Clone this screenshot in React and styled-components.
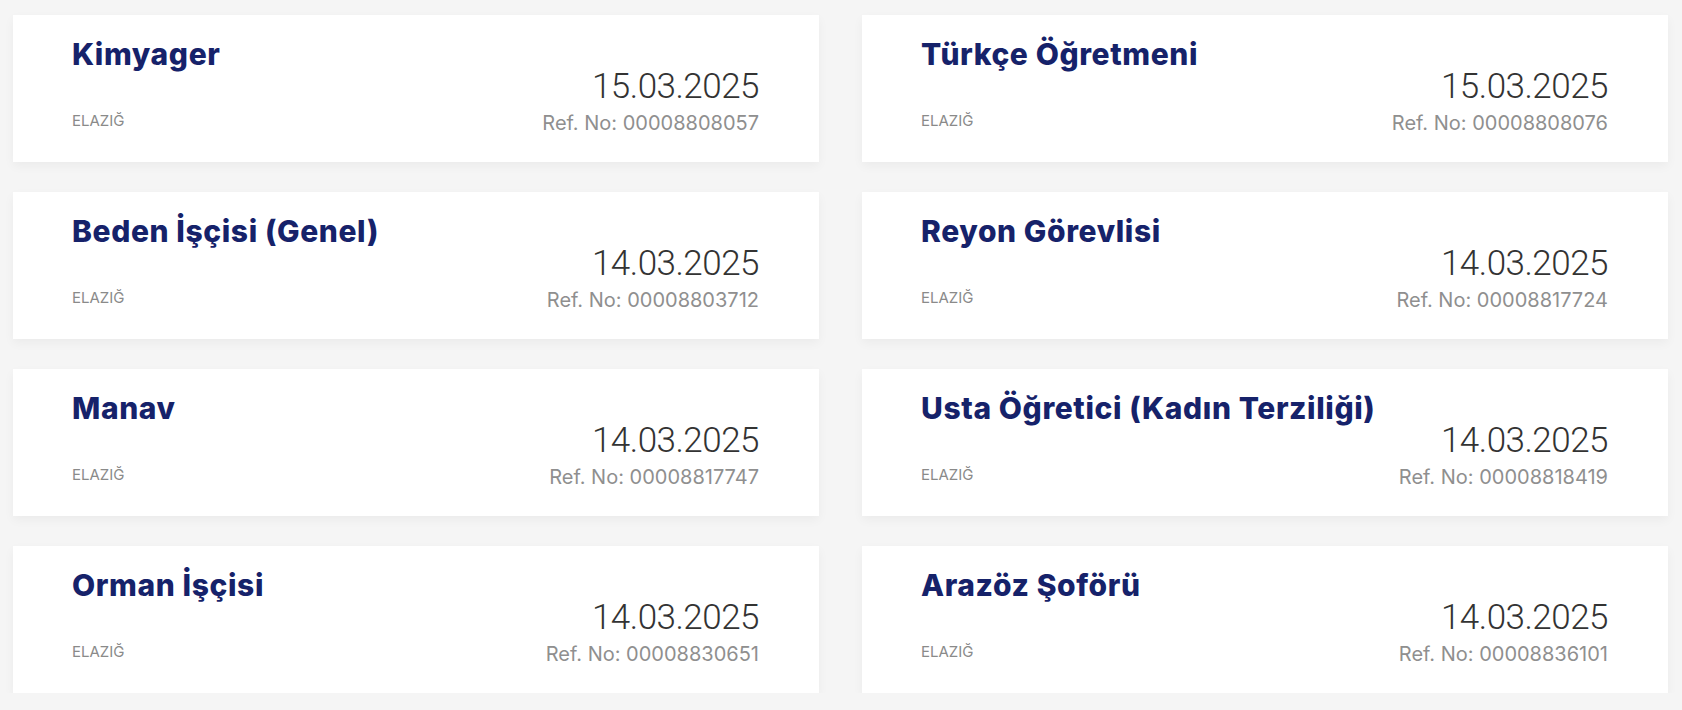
import React from "react";
import styled, { createGlobalStyle } from "styled-components";

const GlobalStyle = createGlobalStyle`
  html, body {
    margin: 0;
    padding: 0;
    background: #f5f5f5;
  }
  body {
    font-family: "Inter", "Noto Sans", sans-serif;
  }
  * { box-sizing: border-box; }
`;

const Page = styled.div`
  padding: 15px 14px 0 13px;
`;

const Grid = styled.div`
  display: grid;
  grid-template-columns: 1fr 1fr;
  column-gap: 43px;
  row-gap: 30px;
`;

const Card = styled.div`
  background: #ffffff;
  height: 147px;
  padding: 24px 60px 0 59px;
  box-shadow: 0 4px 10px rgba(0, 0, 0, 0.045);
  display: flex;
  flex-direction: column;
`;

const Title = styled.h3`
  margin: 0;
  font-family: "Inter", "Noto Sans", sans-serif;
  font-weight: 800;
  font-size: 30px;
  line-height: 30px;
  letter-spacing: 0.6px;
  color: #16226a;
  white-space: nowrap;
`;

const Bottom = styled.div`
  display: flex;
  justify-content: space-between;
  align-items: flex-end;
`;

const Location = styled.span`
  font-family: "Inter", "Noto Sans", sans-serif;
  font-size: 15px;
  line-height: 18px;
  color: #8a8a8a;
  margin-bottom: 5px;
`;

const Meta = styled.div`
  display: flex;
  flex-direction: column;
  align-items: flex-end;
`;

const DateText = styled.span`
  font-family: "Roboto", "Inter", sans-serif;
  font-weight: 300;
  font-size: 35px;
  line-height: 36px;
  letter-spacing: -0.5px;
  color: #333333;
`;

const Ref = styled.span`
  margin-top: 6px;
  font-family: "Inter", "Noto Sans", sans-serif;
  font-size: 20px;
  line-height: 24px;
  color: #8f8f8f;
`;

const jobs = [
  { title: "Kimyager", date: "15.03.2025", ref: "00008808057" },
  { title: "Türkçe Öğretmeni", date: "15.03.2025", ref: "00008808076" },
  { title: "Beden İşçisi (Genel)", date: "14.03.2025", ref: "00008803712" },
  { title: "Reyon Görevlisi", date: "14.03.2025", ref: "00008817724" },
  { title: "Manav", date: "14.03.2025", ref: "00008817747" },
  { title: "Usta Öğretici (Kadın Terziliği)", date: "14.03.2025", ref: "00008818419" },
  { title: "Orman İşçisi", date: "14.03.2025", ref: "00008830651" },
  { title: "Arazöz Şoförü", date: "14.03.2025", ref: "00008836101" },
];

export default function App() {
  return (
    <>
      <GlobalStyle />
      <Page>
        <Grid>
          {jobs.map((j) => (
            <Card key={j.ref}>
              <Title>{j.title}</Title>
              <Bottom>
                <Location>ELAZIĞ</Location>
                <Meta>
                  <DateText>{j.date}</DateText>
                  <Ref>Ref. No: {j.ref}</Ref>
                </Meta>
              </Bottom>
            </Card>
          ))}
        </Grid>
      </Page>
    </>
  );
}
